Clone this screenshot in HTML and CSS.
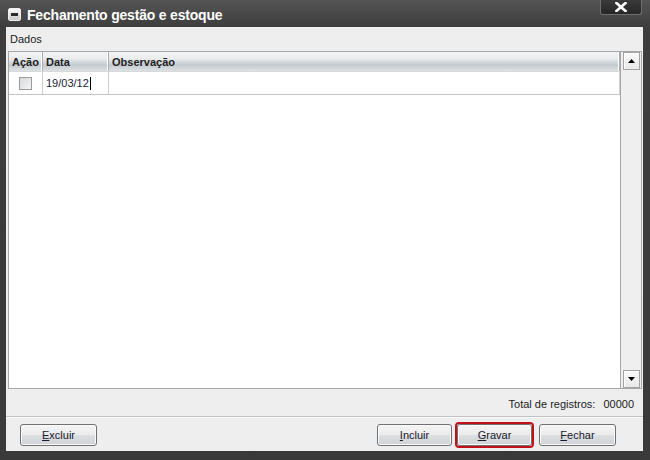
FILE: index.html
```html
<!DOCTYPE html>
<html lang="pt">
<head>
<meta charset="utf-8">
<title>Fechamento gestão e estoque</title>
<link rel="stylesheet" href="styles.css">
</head>
<body>
<div class="window">
  <div class="titlebar">
    <span class="sysicon"><span class="bar"></span></span>
    <span class="title">Fechamento gestão e estoque</span>
    <span class="close">
      <svg width="12" height="10" viewBox="0 0 12 10"><path d="M1.5 1 L10.5 9 M10.5 1 L1.5 9" stroke="#fff" stroke-width="2.6" stroke-linecap="square"/></svg>
    </span>
  </div>
  <div class="content">
    <div class="section">Dados</div>
    <div class="gridbox">
      <div class="grid">
        <div class="ghead">
          <div class="hc c1">Ação</div>
          <div class="hc c2">Data</div>
          <div class="hc c3">Observação</div>
        </div>
        <div class="grow">
          <div class="gc c1"><span class="chk"></span></div>
          <div class="gc c2">19/03/12<span class="caret"></span></div>
          <div class="gc c3"></div>
        </div>
      </div>
      <div class="vscroll">
        <div class="sbtn"><svg width="7" height="4" viewBox="0 0 7 4"><path d="M0 4 L3.5 0 L7 4 Z" fill="#000"/></svg></div>
        <div class="track"></div>
        <div class="sbtn"><svg width="7" height="4" viewBox="0 0 7 4"><path d="M0 0 L7 0 L3.5 4 Z" fill="#000"/></svg></div>
      </div>
    </div>
    <div class="totals">Total de registros:<span class="count">00000</span></div>
    <div class="buttons">
      <button class="btn"><u>E</u>xcluir</button>
      <span class="spacer"></span>
      <button class="btn btn-incl"><u>I</u>ncluir</button>
      <span class="focus"><button class="btn btn-grav"><u>G</u>ravar</button></span>
      <button class="btn btn-last"><u>F</u>echar</button>
    </div>
  </div>
</div>
</body>
</html>
```

FILE: styles.css
```css
* { box-sizing: border-box; }
html, body { margin: 0; padding: 0; }
body {
  width: 650px;
  height: 460px;
  overflow: hidden;
  font-family: "Liberation Sans", Arial, sans-serif;
  font-size: 11px;
  color: #1b1b1b;
  background: #3a3a3a;
}
.window {
  width: 650px;
  height: 460px;
  display: flex;
  flex-direction: column;
  background: linear-gradient(#555555, #3d3d3d 27px, #3a3a3a);
}
.titlebar {
  height: 27px;
  flex: none;
  display: flex;
  align-items: center;
  padding-left: 8px;
}
.sysicon {
  width: 13px;
  height: 13px;
  border: 1px solid #f0f0f0;
  border-radius: 2px;
  background: linear-gradient(#fafafa, #c9c9c9);
  display: flex;
  align-items: center;
  justify-content: center;
  margin-top: 2px;
}
.sysicon .bar {
  width: 7px;
  height: 3px;
  background: #2b2b2b;
}
.title {
  margin-left: 6px;
  color: #ffffff;
  font-weight: bold;
  font-size: 14px;
  letter-spacing: -0.2px;
  margin-top: 2px;
}
.close {
  margin-left: auto;
  margin-right: 8px;
  align-self: flex-start;
  width: 42px;
  height: 15px;
  background: linear-gradient(#3a3a3a, #262626);
  border: 1px solid #6f6f6f;
  border-top: none;
  border-radius: 0 0 3px 3px;
  display: flex;
  align-items: center;
  justify-content: center;
}
.content {
  margin: 0 7px 0 6px;
  height: 424px;
  flex: none;
  background: #eeeeee;
  display: flex;
  flex-direction: column;
}
.section {
  height: 24px;
  line-height: 24px;
  padding-left: 4px;
  color: #1c1c1c;
}
.gridbox {
  height: 338px;
  margin: 0 1px 0 2px;
  border: 1px solid #a7a7a7;
  display: flex;
  background: #ffffff;
}
.grid {
  flex: 1;
  background: #ffffff;
}
.ghead {
  height: 20px;
  display: flex;
  background: linear-gradient(#f3f4f5 0%, #e9ecee 35%, #c3cad0 68%, #dde1e4 100%);
  border-bottom: 1px solid #d6d9dc;
}
.hc {
  font-weight: bold;
  color: #222;
  line-height: 20px;
  padding-left: 3px;
  border-right: 1px solid #a9adb0;
  box-shadow: inset -1px 0 0 #ffffff;
}
.c1 { width: 34px; }
.c2 { width: 66px; }
.c3 { flex: 1; }
.grow {
  height: 23px;
  display: flex;
  border-bottom: 1px solid #c4c4c4;
}
.gc {
  border-right: 1px solid #cfcfcf;
  display: flex;
  align-items: center;
  padding-left: 3px;
  color: #1a1a3a;
}
.gc.c1 { justify-content: center; padding-left: 0; }
.chk {
  width: 13px;
  height: 13px;
  border: 1px solid #9a9a9a;
  background: linear-gradient(135deg, #d6d9dc, #f4f4f4);
}
.caret {
  display: inline-block;
  width: 1px;
  height: 13px;
  background: #000;
  margin-left: 1px;
}
.vscroll {
  width: 21px;
  border-left: 1px solid #a7a7a7;
  background: #efefef;
  display: flex;
  flex-direction: column;
  padding: 0 1px 0 2px;
}
.sbtn {
  height: 18px;
  border: 1px solid #a3a3a3;
  background: linear-gradient(#f9f9f9, #e9e9e9);
  box-shadow: inset 1px 1px 0 #ffffff;
  display: flex;
  align-items: center;
  justify-content: center;
}
.track { flex: 1; }
.totals {
  height: 28px;
  display: flex;
  justify-content: flex-end;
  align-items: center;
  padding: 3px 9px 0 0;
  color: #1c1c1c;
  border-bottom: 1px solid #c2c2c2;
}
.count { margin-left: 8px; }
.buttons {
  flex: 1;
  display: flex;
  align-items: center;
  border-top: 1px solid #fbfbfb;
  padding: 0 27px 0 14px;
}
.spacer { flex: 1; }
.btn {
  width: 77px;
  height: 22px;
  border: 1px solid #707070;
  border-radius: 3px;
  background: linear-gradient(#f4f4f4 0%, #ececec 48%, #dcdfe1 52%, #cfd3d6 100%);
  box-shadow: inset 0 0 0 1px #fbfbfb;
  font-family: "Liberation Sans", Arial, sans-serif;
  font-size: 11px;
  color: #1a1a2e;
  padding: 0;
}
.btn u { text-underline-offset: 1px; }
.btn-incl { width: 75px; }
.focus {
  margin-left: 3px;
  height: 26px;
  display: flex;
  align-items: center;
  border: 2px solid #c4101a;
  border-radius: 4px;
}
.btn-grav { width: 75px; }
.btn-last { margin-left: 5px; }
```
